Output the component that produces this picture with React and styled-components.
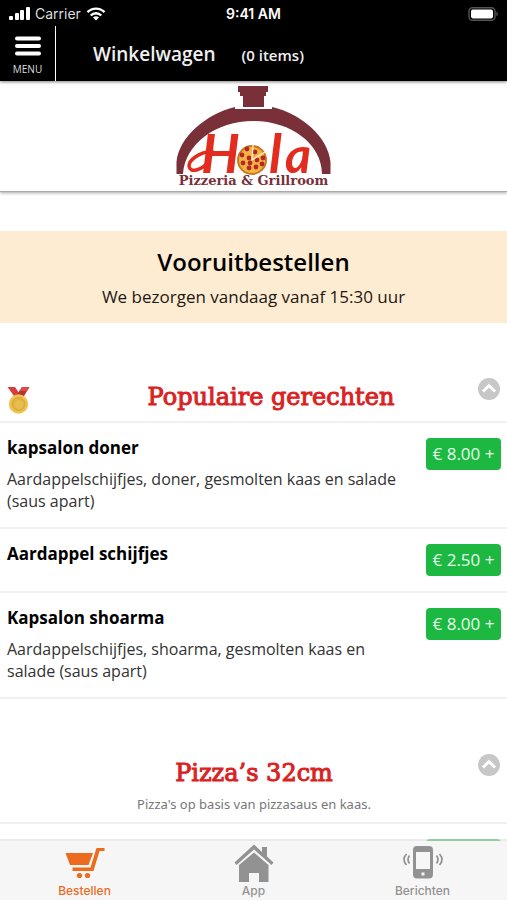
import React from "react";
import styled, { createGlobalStyle } from "styled-components";

const GlobalStyle = createGlobalStyle`
  *, *::before, *::after { box-sizing: border-box; }
  body {
    margin: 0;
    background: #fff;
    color: #000;
    font-family: "Open Sans", "Noto Sans", sans-serif;
  }
  h1, h2, h3, p, ul { margin: 0; padding: 0; }
  button { font-family: inherit; cursor: pointer; }
`;

const Screen = styled.div`
  display: flex;
  flex-direction: column;
  height: 100vh;
`;

const StatusBar = styled.div`
  display: grid;
  grid-template-columns: 1fr auto 1fr;
  align-items: center;
  height: 26px;
  padding: 2px 8px 0;
  background: #000;
  color: #fff;
  font-family: Inter, sans-serif;
  font-size: 14px;
  line-height: 20px;
  flex-shrink: 0;
`;

const StatusGroup = styled.div`
  display: flex;
  align-items: center;
  gap: 5px;
  color: #ddd;
  justify-content: ${(p) => (p.$end ? "flex-end" : "flex-start")};
`;

const Clock = styled.time`
  font-size: 14px;
  font-weight: 600;
`;

const Header = styled.header`
  position: relative;
  z-index: 1;
  display: flex;
  height: 55px;
  flex-shrink: 0;
  background: #000;
  color: #fff;
  box-shadow: 0 1px 3px rgba(0, 0, 0, 0.5);
`;

const MenuButton = styled.button`
  display: flex;
  flex-direction: column;
  align-items: center;
  gap: 6px;
  width: 56px;
  padding: 10px 0 0;
  border: 0;
  border-right: 1px solid #fff;
  background: none;
  color: #ddd;
  font-size: 10px;
  line-height: 14px;
`;

const HeaderTitle = styled.div`
  display: flex;
  align-items: center;
  gap: 26px;
  padding-left: 37px;
`;

const Title = styled.h1`
  color: #f0f0f0;
  font-size: 19px;
  font-weight: 600;
  line-height: 28px;
`;

const ItemCount = styled.span`
  padding-top: 3px;
  color: #f0f0f0;
  font-size: 15px;
  font-weight: 600;
  line-height: 20px;
`;

const Content = styled.main`
  flex: 1;
  min-height: 0;
  overflow-y: auto;
  scrollbar-width: none;
`;

const Brand = styled.div`
  display: flex;
  justify-content: center;
  height: 111px;
  padding-top: 3px;
  border-bottom: 1px solid #aaa;
  box-shadow: 0 1px 3px rgba(0, 0, 0, 0.35);
`;

const Notice = styled.section`
  display: flex;
  flex-direction: column;
  gap: 6px;
  margin-top: 39px;
  padding: 14px 16px;
  background: #feecd2;
  text-align: center;
`;

const NoticeTitle = styled.h2`
  font-size: 24px;
  font-weight: 600;
  line-height: 34px;
`;

const NoticeText = styled.p`
  color: #1c1812;
  font-size: 17px;
  line-height: 24px;
`;

const CategoryHeader = styled.div`
  display: grid;
  grid-template-columns: ${(p) => (p.$withIcon ? "58px" : "24px")} 1fr 24px;
  padding: 54px 6px 6px 7px;
  border-bottom: 2px solid #f0f0f0;
`;

const CategoryIcon = styled.span`
  padding-top: 9px;
  line-height: 0;
`;

const CategoryText = styled.div`
  display: flex;
  flex-direction: column;
  gap: 3px;
  padding: 2px 8px 0;
  text-align: center;
`;

const CategoryTitle = styled.h2`
  color: #d92323;
  font-family: "DejaVu Serif", serif;
  font-size: 24px;
  font-weight: 400;
  line-height: 36px;
  -webkit-text-stroke: 1px #d92323;
`;

const CategoryNote = styled.p`
  padding-bottom: 2px;
  color: #777;
  font-family: "Noto Sans", sans-serif;
  font-size: 13px;
  line-height: 20px;
`;

const CollapseButton = styled.button`
  align-self: start;
  width: 24px;
  height: 24px;
  padding: 1px;
  border: 0;
  background: none;
  line-height: 0;
`;

const DishList = styled.ul`
  list-style: none;
`;

const Dish = styled.li`
  display: flex;
  align-items: flex-start;
  justify-content: space-between;
  gap: 24px;
  padding: 15px 6px 15px 7px;
  border-bottom: 2px solid #f0f0f0;
`;

const DishText = styled.div`
  display: flex;
  flex-direction: column;
  gap: 10px;
`;

const DishName = styled.h3`
  font-size: 17px;
  font-weight: 700;
  line-height: 20px;
`;

const DishDescription = styled.p`
  color: #333;
  font-size: 16px;
  line-height: 22px;
`;

const PriceButton = styled.button`
  flex-shrink: 0;
  min-width: 75px;
  height: 32px;
  padding: 0 6px;
  border: 0;
  border-radius: 4px;
  background: #1cb842;
  color: #e6ffe9;
  font-size: 17px;
  line-height: 32px;
`;

const TabBar = styled.nav`
  position: relative;
  display: grid;
  grid-template-columns: repeat(3, 1fr);
  height: 61px;
  margin-top: -2px;
  flex-shrink: 0;
  border-top: 2px solid rgba(220, 220, 220, 0.6);
  background: #f6f6f6;
  background-clip: padding-box;
`;

const Tab = styled.a`
  display: flex;
  flex-direction: column;
  align-items: center;
  gap: 1px;
  padding-top: 3px;
  color: ${(p) => (p.$active ? "#ed6b1f" : "#929292")};
  font-family: Inter, sans-serif;
  font-size: 12px;
  font-weight: 500;
  line-height: 16px;
  text-decoration: none;
`;

const SignalIcon = () => (
  <svg width="22" height="14" viewBox="0 0 22 14" fill="#fff" aria-hidden="true">
    <rect x="1" y="9" width="4" height="4" rx="1" />
    <rect x="7" y="6" width="4" height="7" rx="1" />
    <rect x="12" y="3" width="4" height="10" rx="1" />
    <rect x="18" y="0" width="4" height="13" rx="1" />
  </svg>
);

const WifiIcon = () => (
  <svg width="20" height="14" viewBox="0 0 20 14" fill="none" stroke="#fff" strokeWidth="2.4" aria-hidden="true">
    <path d="M1.5 5.2C6.2 .4 13.8 .4 18.5 5.2" />
    <path d="M4.7 8.5C7.7 5.5 12.3 5.5 15.3 8.5" />
    <path d="M10 13.5L7 10.5Q10 8 13 10.5Z" fill="#fff" stroke="none" />
  </svg>
);

const BatteryIcon = () => (
  <svg width="31" height="14" viewBox="0 0 31 14" aria-hidden="true">
    <rect x="1" y="0.8" width="26" height="12.4" rx="3.5" fill="none" stroke="#555" strokeWidth="1.4" />
    <rect x="3" y="2.6" width="22" height="8.8" rx="1.8" fill="#fff" />
    <path d="M28.5 4.5Q31 7 28.5 9.5Z" fill="#666" />
  </svg>
);

const MenuIcon = () => (
  <svg width="26" height="20" viewBox="0 0 26 20" fill="#fff" aria-hidden="true">
    <rect y="0.5" width="26" height="4" rx="2" />
    <rect y="8" width="26" height="4" rx="2" />
    <rect y="15.5" width="26" height="4" rx="2" />
  </svg>
);

const pepperoni = [
  [82, 69], [90, 72], [77, 75], [84, 78], [92, 80], [78, 83],
  [84, 88], [91, 87], [98, 78], [85, 83], [97, 84],
];

const Logo = () => (
  <svg width="158" height="104" viewBox="10 4 158 104" role="img" aria-label="Hola Pizzeria & Grillroom">
    <g fill="#793039">
      <path d="M73 6H103V12H101V16H99V27H78V16H75V12H73Z" />
      <path d="M11.5 94V82C14 57 41 34 70 27V29H107V27C137 34 163 57 165.5 82V94H157C157 64 126 41 88.5 41S20 64 18 94Z" />
    </g>
    <path d="M47 71C33 73 24 80 24 86C25 94 36 90 44 82" fill="none" stroke="#e32c20" strokeWidth="3.5" strokeLinecap="round" />
    <text y="93" fill="#e32c20" fontFamily="Lato, sans-serif" fontStyle="italic" fontWeight="700" fontSize="54">
      <tspan x="36">H</tspan>
      <tspan x="75" fontSize="42">o</tspan>
      <tspan x="104" fontSize="54">l</tspan>
      <tspan x="120" fontSize="50">a</tspan>
    </text>
    <circle cx="87" cy="80" r="15" fill="#c9771f" />
    <circle cx="87" cy="80" r="13" fill="#f2b543" />
    <g fill="#b8262c">
      {pepperoni.map(([x, y]) => (
        <circle key={`${x}-${y}`} cx={x} cy={y} r="2.4" />
      ))}
    </g>
    <path d="M87 80L88 65M87 80L100 72" stroke="#fff3d8" strokeWidth="1.2" />
    <text x="88.5" y="105" textAnchor="middle" fill="#793039" fontFamily="DejaVu Serif, serif" fontWeight="700" fontSize="13">
      Pizzeria &amp; Grillroom
    </text>
  </svg>
);

const MedalIcon = () => (
  <svg width="23" height="28" viewBox="0 0 23 28" aria-hidden="true">
    <path d="M0.5 1H8L14 10H7Z" fill="#d63d3c" />
    <path d="M15 1H22.5L17 10H9Z" fill="#b92f32" />
    <path d="M15 1H22.5L20 5H12.5Z" fill="#df4a45" />
    <circle cx="11.5" cy="18" r="9.7" fill="#eec24c" />
    <circle cx="11.5" cy="18" r="6.5" fill="#e2b23f" stroke="#d8a63a" strokeWidth="1" />
    <circle cx="12" cy="18.5" r="4.5" fill="#e8bd50" />
  </svg>
);

const ChevronIcon = () => (
  <svg width="22" height="22" viewBox="0 0 22 22" aria-hidden="true">
    <circle cx="11" cy="11" r="11" fill="#c7c7c7" />
    <path d="M5 13.5L11 7.5L17 13.5" fill="none" stroke="#fff" strokeWidth="3" />
  </svg>
);

const CartIcon = () => (
  <svg width="40" height="38" viewBox="0 0 40 38" fill="currentColor" aria-hidden="true">
    <path d="M0.5 9H28L23.5 21H5Z" />
    <path d="M39.5 4V7H34.5L28.5 27H7.5V23.5H25.5L31.5 4Z" />
    <circle cx="14.5" cy="31.5" r="2.6" />
    <circle cx="22.5" cy="31.5" r="2.6" />
  </svg>
);

const HomeIcon = () => (
  <svg width="40" height="38" viewBox="0 0 40 38" fill="currentColor" aria-hidden="true">
    <path d="M20 0.5L28 8V3H33V12.5L39.5 18.5L37.5 21L20 5.5L2.5 21L0.5 18.5Z" />
    <path d="M20 8.5L34.5 21V38H25V29H15V38H5V21Z" />
  </svg>
);

const PhoneIcon = () => (
  <svg width="40" height="38" viewBox="0 0 40 38" aria-hidden="true">
    <path fill="currentColor" fillRule="evenodd" d="M14 2H26Q30 2 30 6V30Q30 34.5 26 34.5H14Q10 34.5 10 30V6Q10 2 14 2ZM13 8V25H27V8ZM18.5 28.5V31.5H21.5V28.5Z" />
    <path fill="none" stroke="currentColor" strokeWidth="1.7" d="M6.5 11.5Q3.5 15.5 6.5 19.5M3.5 10Q-1.5 15.5 3.5 21M33.5 11.5Q36.5 15.5 33.5 19.5M36.5 10Q41.5 15.5 36.5 21" />
  </svg>
);

const categories = [
  {
    title: "Populaire gerechten",
    medal: true,
    dishes: [
      { id: 1, name: "kapsalon doner", text: "Aardappelschijfjes, doner, gesmolten kaas en salade (saus apart)", price: "8.00" },
      { id: 2, name: "Aardappel schijfjes", price: "2.50" },
      { id: 3, name: "Kapsalon shoarma", text: "Aardappelschijfjes, shoarma, gesmolten kaas en salade (saus apart)", price: "8.00" },
    ],
  },
  {
    title: "Pizza’s 32cm",
    note: "Pizza's op basis van pizzasaus en kaas.",
    dishes: [{ id: 4 }],
  },
];

const tabs = [
  { label: "Bestellen", Icon: CartIcon, active: true },
  { label: "App", Icon: HomeIcon },
  { label: "Berichten", Icon: PhoneIcon },
];

export default function App() {
  return (
    <Screen>
      <GlobalStyle />
      <StatusBar>
        <StatusGroup>
          <SignalIcon />
          <span>Carrier</span>
          <WifiIcon />
        </StatusGroup>
        <Clock>9:41 AM</Clock>
        <StatusGroup $end>
          <BatteryIcon />
        </StatusGroup>
      </StatusBar>
      <Header>
        <MenuButton type="button">
          <MenuIcon />
          MENU
        </MenuButton>
        <HeaderTitle>
          <Title>Winkelwagen</Title>
          <ItemCount>(0 items)</ItemCount>
        </HeaderTitle>
      </Header>
      <Content>
        <Brand>
          <Logo />
        </Brand>
        <Notice>
          <NoticeTitle>Vooruitbestellen</NoticeTitle>
          <NoticeText>We bezorgen vandaag vanaf 15:30 uur</NoticeText>
        </Notice>
        {categories.map((category) => (
          <section key={category.title}>
            <CategoryHeader $withIcon={category.medal}>
              <CategoryIcon>{category.medal && <MedalIcon />}</CategoryIcon>
              <CategoryText>
                <CategoryTitle>{category.title}</CategoryTitle>
                {category.note && <CategoryNote>{category.note}</CategoryNote>}
              </CategoryText>
              <CollapseButton type="button" aria-label={`${category.title} inklappen`}>
                <ChevronIcon />
              </CollapseButton>
            </CategoryHeader>
            <DishList>
              {category.dishes.map((dish) => (
                <Dish key={dish.id}>
                  <DishText>
                    {dish.name && <DishName>{dish.name}</DishName>}
                    {dish.text && <DishDescription>{dish.text}</DishDescription>}
                  </DishText>
                  <PriceButton type="button" aria-label={dish.price ? undefined : "Toevoegen"}>
                    {dish.price && `€ ${dish.price} +`}
                  </PriceButton>
                </Dish>
              ))}
            </DishList>
          </section>
        ))}
      </Content>
      <TabBar>
        {tabs.map(({ label, Icon, active }) => (
          <Tab key={label} href="#" $active={active} aria-current={active ? "page" : undefined}>
            <Icon />
            {label}
          </Tab>
        ))}
      </TabBar>
    </Screen>
  );
}
